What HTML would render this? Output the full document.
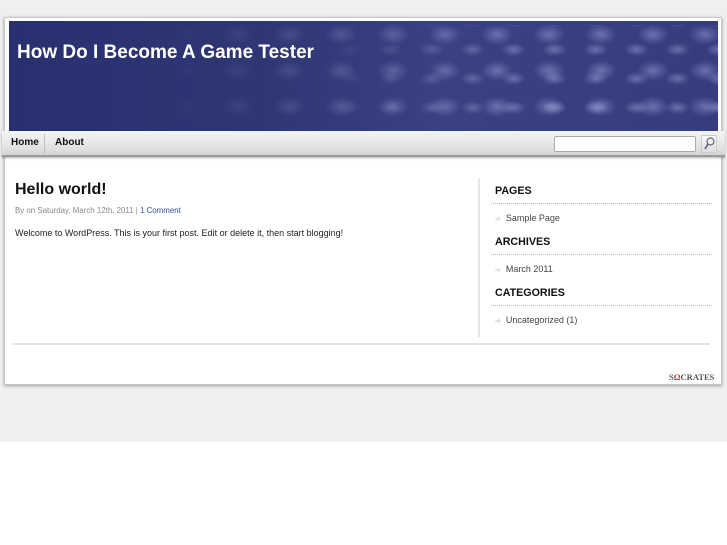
<!DOCTYPE html>
<html><head><style>
*{margin:0;padding:0;box-sizing:border-box}
body{width:727px;height:545px;background:#fff;font-family:"Liberation Sans",sans-serif;position:relative;overflow:hidden}
#bg{position:absolute;left:0;top:0;width:727px;height:442px;background:#efefef}
#wrap{position:absolute;left:4px;top:17px;width:718px;height:368px;background:#fff;border:1px solid #c8c8c8;box-shadow:0 1px 3px rgba(0,0,0,.35)}
#hdr{position:absolute;left:9px;top:21px;width:709px;height:111px;overflow:hidden;background:linear-gradient(90deg,#283070 0%,#2e3674 35%,#3a4182 60%,#363d7e 100%)}
#tex{position:absolute;left:150px;top:-8px;width:560px;height:125px;background:radial-gradient(ellipse 22px 14px at 50% 60%,rgba(170,176,225,.45),rgba(100,108,175,.2) 60%,transparent 75%);background-size:52px 36px;-webkit-mask-image:linear-gradient(90deg,transparent,#000 60%);mask-image:linear-gradient(90deg,transparent,#000 60%)}
#tex2{position:absolute;left:300px;top:4px;width:410px;height:107px;background:radial-gradient(ellipse 18px 10px at 50% 50%,rgba(200,205,245,.35),transparent 70%);background-size:41px 29px;background-position:20px 10px;-webkit-mask-image:linear-gradient(90deg,transparent,#000 50%);mask-image:linear-gradient(90deg,transparent,#000 50%)}
#hdr h1{position:absolute;left:8px;top:21px;color:#fff;font-size:19px;font-weight:bold}
#nav{position:absolute;left:2px;top:131px;width:723px;height:26px;background:linear-gradient(#f4f4f4,#e2e2e2 70%,#d4d4d4);border-bottom:2px solid #9a9a9a;box-shadow:0 1px 2px rgba(0,0,0,.3)}
#nav a{position:absolute;top:6px;font-size:10px;font-weight:bold;color:#111}
#sep{position:absolute;left:42px;top:3px;width:1px;height:20px;background:#c0c0c0}
#search{position:absolute;left:552px;top:5px;width:142px;height:16px;background:#fff;border:1px solid #aaa;border-radius:2px}
#sbtn{position:absolute;left:699px;top:4px;width:16px;height:18px;background:linear-gradient(#fafafa,#ddd);border:1px solid #ccc}
h2{position:absolute;left:15px;top:181px;font-size:16px;font-weight:bold;color:#111}
.meta{position:absolute;left:15px;top:206px;font-size:7.9px;color:#888}
.meta span{color:#3050a0}
.p{position:absolute;left:15px;top:228px;font-size:9px;color:#222}
#vline{position:absolute;left:478px;top:178px;width:2px;height:159px;background:#e6e6e6}
.wt{position:absolute;left:495px;font-size:10.7px;font-weight:bold;color:#111}
.dl{position:absolute;left:491px;width:221px;border-top:1px dotted #bbb}
.li{position:absolute;left:495px;font-size:9px;color:#444}
.li b{color:#aaa;font-weight:normal;font-size:7px;margin-right:5px}
#hline{position:absolute;left:13px;top:343px;width:697px;height:2px;background:#e4e4e4}
#soc{position:absolute;left:669px;top:372px;font-family:"Liberation Serif",serif;font-size:8.5px;color:#555;font-weight:bold}
#soc i{color:#d03020;font-style:normal}
</style></head><body>
<div id="bg"></div>
<div id="wrap"></div>
<div id="hdr"><div id="tex"></div><div id="tex2"></div><h1>How Do I Become A Game Tester</h1></div>
<div id="nav"><a style="left:9px">Home</a><div id="sep"></div><a style="left:53px">About</a><div id="search"></div><div id="sbtn"><svg width="14" height="16" viewBox="0 0 14 16"><circle cx="8.5" cy="5.5" r="3.5" fill="none" stroke="#667" stroke-width="1.2"/><path d="M6 8 L3 13" stroke="#557" stroke-width="1.6"/></svg></div></div>
<h2>Hello world!</h2>
<div class="meta">By on Saturday, March 12th, 2011 | <span>1 Comment</span></div>
<div class="p">Welcome to WordPress. This is your first post. Edit or delete it, then start blogging!</div>
<div id="vline"></div>
<div class="wt" style="top:185px">PAGES</div><div class="dl" style="top:203px"></div>
<div class="li" style="top:213px"><b>➾</b>Sample Page</div>
<div class="wt" style="top:236px">ARCHIVES</div><div class="dl" style="top:254px"></div>
<div class="li" style="top:264px"><b>➾</b>March 2011</div>
<div class="wt" style="top:287px">CATEGORIES</div><div class="dl" style="top:305px"></div>
<div class="li" style="top:315px"><b>➾</b>Uncategorized (1)</div>
<div id="hline"></div>
<div id="soc">S<i>Ω</i>CRATES</div>
</body></html>
